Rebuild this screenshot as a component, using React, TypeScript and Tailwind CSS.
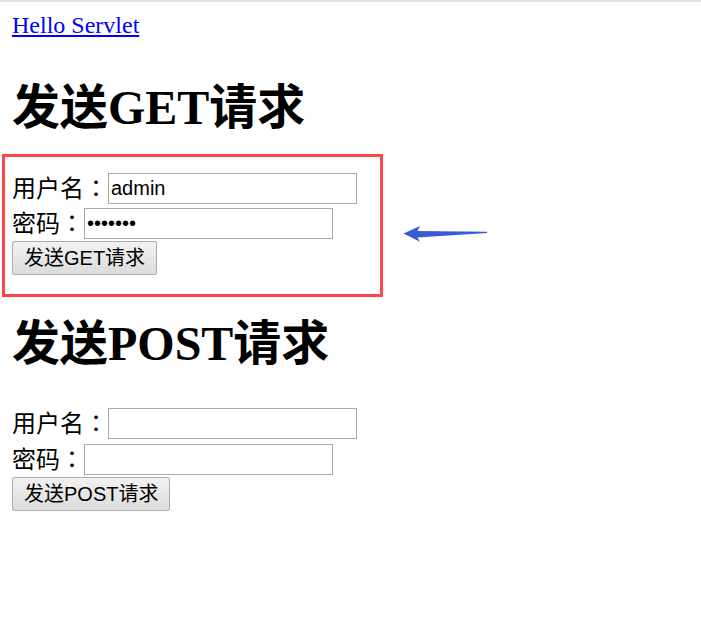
import React from 'react';

const serif = "font-['Liberation_Serif','Noto_Sans_CJK_SC',serif]";
const sans = "font-['Liberation_Sans','Noto_Sans_CJK_SC',sans-serif]";

const Field: React.FC<{ label: string; type?: string; value?: string; className?: string }> = ({
  label,
  type = 'text',
  value = '',
  className = '',
}) => (
  <div className={`flex items-center h-[31px] ${className}`}>
    <span className="pb-[4px] text-[24px] leading-none text-black font-['Noto_Sans_CJK_SC',sans-serif]">
      {label}
      {/* centred full-width colon, as in the original */}
      <span className="font-['Noto_Sans_CJK_TC',sans-serif]">：</span>
    </span>
    <input
      type={type}
      defaultValue={value}
      readOnly
      className={`w-[249px] h-[31px] border border-[#a9a9a9] bg-white px-[2px] text-[20px] text-black outline-none ${sans}`}
    />
  </div>
);

const RequestForm: React.FC<{ title: string; method: string; filled?: boolean; gap: string }> = ({
  title,
  method,
  filled,
  gap,
}) => (
  <>
    <h1 className={`mt-[42px] text-[48px] leading-[54px] font-bold text-black ${serif}`}>{title}</h1>
    <form className={`flex flex-col items-start ${method === 'GET' ? 'mt-[38px]' : 'mt-[37px]'}`}>
      <Field label="用户名" value={filled ? 'admin' : ''} />
      <Field label="密码" type="password" value={filled ? '1234567' : ''} className={gap} />
      <button
        type="button"
        className={`mt-[2px] h-[34px] px-[11px] rounded-[2px] border border-[#acacac] bg-gradient-to-b from-[#f2f2f2] to-[#dcdcdc] text-[20px] text-black ${sans}`}
      >
        {title}
      </button>
    </form>
  </>
);

export default function App() {
  return (
    <div className="relative min-h-[624px] w-full bg-white">
      <div className="h-[2px] bg-[#e3e3e3]" />
      <div className="px-[12px] pt-[10px]">
        <a href="#" className={`block w-fit text-[24px] leading-[27px] text-[#0000ff] underline ${serif}`}>
          Hello Servlet
        </a>
        <RequestForm title="发送GET请求" method="GET" filled gap="mt-[4px]" />
        <RequestForm title="发送POST请求" method="POST" gap="mt-[5px]" />
      </div>

      {/* annotation: red frame and arrow */}
      <div className="absolute left-[2px] top-[154px] w-[381px] h-[143px] border-[3px] border-[#ff4545] pointer-events-none" />
      <svg className="absolute left-[400px] top-[222px]" width="92" height="24" viewBox="400 222 92 24">
        <polygon
          points="403.5,233.5 420,226 417.5,231 487,231.8 487,233 417.5,237.5 420,241.8"
          fill="#3a5bd6"
        />
      </svg>
    </div>
  );
}
